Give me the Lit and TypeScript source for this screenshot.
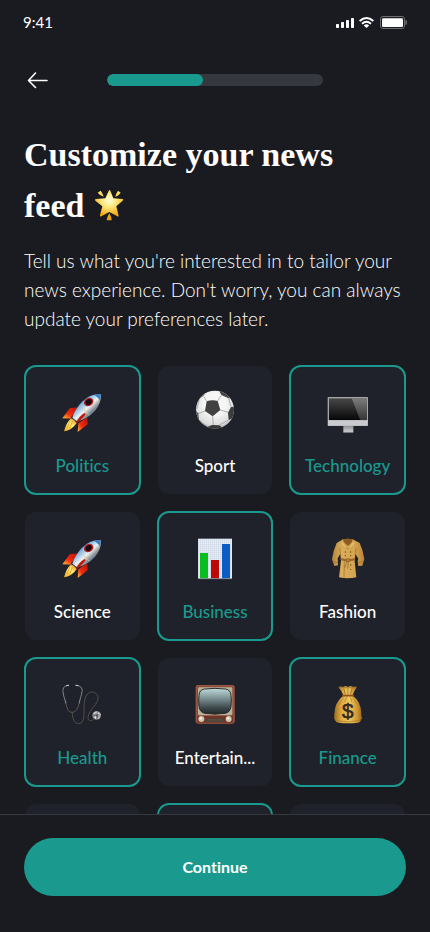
import { LitElement, html, css, TemplateResult } from "lit";
import { customElement, property, state } from "lit/decorators.js";

const rocket = html`<svg viewBox="115 84 144 144" aria-hidden="true">
  <defs>
    <linearGradient id="body" x1="0" y1="0" x2="1" y2="1">
      <stop offset="0.25" stop-color="#4f8fcb" /><stop offset="0.42" stop-color="#a9cfee" />
      <stop offset="0.52" stop-color="#f1f2ee" /><stop offset="0.64" stop-color="#8e9499" />
      <stop offset="0.8" stop-color="#2d5f96" />
    </linearGradient>
    <linearGradient id="fin" x1="1" y1="0" x2="0" y2="1">
      <stop offset="0" stop-color="#b80f08" /><stop offset="0.6" stop-color="#ee2a10" /><stop offset="1" stop-color="#ffc23a" />
    </linearGradient>
    <linearGradient id="flame" x1="1" y1="0" x2="0" y2="1">
      <stop offset="0" stop-color="#e8861a" /><stop offset="0.45" stop-color="#fff07a" /><stop offset="1" stop-color="#f7a21b" />
    </linearGradient>
  </defs>
  <path d="M180 142 L151 144 L128 175 L158 176 Z" fill="url(#fin)" />
  <path d="M203 172 L204 193 L174 216 L176 190 Z" fill="url(#fin)" />
  <path d="M152 177 Q140 188 133 214 Q155 212 171 190 L166 178 Z" fill="url(#flame)" />
  <path d="M150 183 L142 205 M158 184 L150 206" stroke="#e58a14" stroke-width="2" fill="none" />
  <path d="M153 171 L160 166 L180 182 L172 189 Z" fill="#2a3138" />
  <path d="M243 103 Q213 100 187 125 Q167 146 158 173 L172 184 Q202 178 226 152 Q246 129 243 103 Z" fill="url(#body)" />
  <path d="M243 103 Q232 101 221 105 Q234 109 241 123 Q244 113 243 103 Z" fill="#3d80c2" />
  <path d="M181 139 Q194 148 209 166" stroke="#d6c27a" stroke-width="2" fill="none" />
  <path d="M195 159 Q178 168 168 190 Q184 182 198 163 Z" fill="#c3150c" />
  <ellipse cx="207" cy="126" rx="15" ry="12" transform="rotate(-35 207 126)" fill="#b91a1d" />
  <ellipse cx="207" cy="126" rx="10" ry="8" transform="rotate(-35 207 126)" fill="#140c0e" />
</svg>`;

const ball = html`<svg viewBox="123 84 144 144" aria-hidden="true">
  <defs>
    <radialGradient id="ball" cx="0.5" cy="0.35" r="0.7">
      <stop offset="0.4" stop-color="#f6f6f6" /><stop offset="0.8" stop-color="#dcdcdc" /><stop offset="1" stop-color="#9c9c9c" />
    </radialGradient>
    <clipPath id="round"><circle cx="195" cy="149" r="57" /></clipPath>
  </defs>
  <circle cx="195" cy="149" r="57" fill="url(#ball)" />
  <g clip-path="url(#round)">
    <path d="M170 124 Q187 118 203 123 L211 150 L188 169 L165 153 Z" fill="#414141" />
    <path d="M206 90 L222 92 L243 114 L236 115 L214 105 Z" fill="#454545" />
    <path d="M138 126 L152 106 L170 93 L160 108 L146 118 Z" fill="#5c5c5c" />
    <path d="M254 140 L243 141 L234 158 L236 180 L254 172 Z" fill="#3c3c3c" />
    <path d="M170 202 L186 195 L208 196 L216 202 L206 210 L180 210 Z" fill="#3a3a3a" />
    <path d="M136 150 L145 160 L147 180 L138 172 Z" fill="#5a5a5a" />
    <g stroke="#8c8c8c" stroke-width="2" fill="none">
      <path d="M170 124 L162 110 M203 123 L213 107 M211 150 L235 157 M188 169 L190 195 M165 153 L147 160" />
      <path d="M236 115 L243 141 M236 180 L208 195 M149 182 L172 200 M148 118 L140 148" />
    </g>
  </g>
</svg>`;

const monitor = html`<svg viewBox="119 84 144 144" aria-hidden="true">
  <defs>
    <linearGradient id="screen" x1="0" y1="0" x2="0" y2="1"><stop offset="0" stop-color="#484848" /><stop offset="1" stop-color="#060606" /></linearGradient>
    <linearGradient id="glare" x1="0" y1="0" x2="0" y2="1"><stop offset="0" stop-color="#7c7c7c" /><stop offset="1" stop-color="#333" /></linearGradient>
    <linearGradient id="stand" x1="0" y1="0" x2="0" y2="1"><stop offset="0" stop-color="#8f9092" /><stop offset="1" stop-color="#d2d3d5" /></linearGradient>
  </defs>
  <rect x="130" y="111" width="121" height="87" rx="2" fill="#a5a6a8" />
  <rect x="134" y="115" width="113" height="66" fill="url(#screen)" />
  <path d="M202 115 H247 V181 H228 Z" fill="url(#glare)" />
  <rect x="131" y="182" width="119" height="15" fill="#c9cacd" />
  <path d="M131 182 H250" stroke="#e4e4e6" stroke-width="2" />
  <rect x="177" y="198" width="30" height="19" fill="url(#stand)" />
  <path d="M177 217 H207" stroke="#8c8e92" stroke-width="2" />
</svg>`;

const chart = html`<svg viewBox="123 84 144 144" aria-hidden="true">
  <defs>
    <pattern id="squares" width="6" height="6" patternUnits="userSpaceOnUse">
      <rect width="6" height="6" fill="#e9eff6" /><path d="M0 0 H6 M0 0 V6" stroke="#bccbdc" stroke-width="2" />
    </pattern>
  </defs>
  <rect x="144" y="98" width="102" height="120" fill="url(#squares)" />
  <rect x="150" y="141" width="24" height="76" fill="#08bd20" />
  <rect x="183" y="162" width="24" height="55" fill="#bd0808" />
  <rect x="216" y="114" width="24" height="103" fill="#0a5dc2" />
  <path d="M144 218 H246" stroke="#858c98" stroke-width="2" />
</svg>`;

const coat = html`<svg viewBox="119 84 144 144" aria-hidden="true">
  <defs>
    <linearGradient id="cloth" x1="0" y1="0" x2="1" y2="0">
      <stop offset="0" stop-color="#b5843a" /><stop offset="0.3" stop-color="#dcae59" /><stop offset="0.7" stop-color="#d4a450" /><stop offset="1" stop-color="#b98538" />
    </linearGradient>
  </defs>
  <path d="M176 100 Q191 96 205 100 L226 111 Q236 132 240 158 L234 179 L222 180 L220 166 L222 158 L213 143 L211 165 L216 214 Q190 220 164 214 L170 164 L168 143 L160 157 L161 178 L150 180 L143 160 Q147 132 157 111 Z" fill="url(#cloth)" />
  <path d="M176 100 Q191 96 205 100 L203 108 L191 120 L178 108 Z" fill="#8d5a22" />
  <path d="M174 103 L190 129 L179 125 L168 114 Z M207 103 L190 129 L203 125 L213 113 Z" fill="#e2ba69" stroke="#a67630" stroke-width="1" />
  <path d="M169 156 Q190 163 212 156 V163 Q190 169 169 163 Z" fill="#9c6829" />
  <path d="M186 158 h9 v9 h-9z M192 166 L190 188 M188 166 L180 187" fill="#b9833a" stroke="#8d5e27" stroke-width="2" />
  <path d="M180 164 L179 215 M168 143 L167 125 M213 143 L215 125 M144 167 L161 170 M221 169 L239 166" stroke="#99692d" stroke-width="2" fill="none" />
  <g fill="#754817"><circle cx="183" cy="138" r="2" /><circle cx="199" cy="138" r="2" /><circle cx="183" cy="149" r="2" /><circle cx="199" cy="149" r="2" /><circle cx="199" cy="177" r="2" /><circle cx="199" cy="190" r="2" /></g>
</svg>`;

const stethoscope = html`<svg viewBox="115 90 144 144" aria-hidden="true">
  <g fill="none" stroke-linecap="round" stroke-width="3">
    <path d="M138 154 C141 174 145 187 157 187 C170 187 176 173 180 153" stroke="#5c5855" />
    <path d="M158 188 C158 207 164 221 177 221 C202 220 188 175 196 147 C202 121 229 119 235 140 C239 161 207 178 205 202 C204 214 217 216 224 205" stroke="#524e4a" />
    <path d="M146 106 C134 107 129 113 130 125 C131 140 136 144 138 159 M169 106 C182 107 189 113 187 125 C185 140 181 144 179 159" stroke="#83878e" />
    <path d="M141 107 L147 106 M169 106 L175 107" stroke="#d0d1d3" />
  </g>
  <circle cx="231" cy="196" r="13" fill="#8a8a8e" />
  <path d="M221 190 L230 184 L231 194 Z M235 186 L244 194 L236 197 Z M221 199 L229 198 L229 208 Z M234 201 L241 200 L236 208 Z" fill="#f1f1f2" />
  <path d="M227 188 L236 205 M222 199 L240 193" stroke="#38383c" stroke-width="2" />
</svg>`;

const television = html`<svg viewBox="123 90 144 144" aria-hidden="true">
  <defs>
    <linearGradient id="tube" x1="0" y1="0" x2="0" y2="1"><stop offset="0" stop-color="#c0dcdc" /><stop offset="0.35" stop-color="#82999b" /><stop offset="0.75" stop-color="#3e494c" /><stop offset="1" stop-color="#20272a" /></linearGradient>
  </defs>
  <path d="M147 216 h12 v8 h-9z M233 216 h12 l-3 8 h-9z" fill="#3c211b" />
  <rect x="137" y="105" width="117" height="116" rx="7" fill="#8b4a38" />
  <rect x="139" y="107" width="113" height="112" rx="5" fill="none" stroke="#a4654f" stroke-width="2" />
  <rect x="144" y="112" width="103" height="84" rx="4" fill="#b9b09a" />
  <path d="M164 117 Q195 113 226 117 Q242 119 243 136 Q245 153 243 170 Q240 187 226 190 Q195 195 164 190 Q150 187 147 170 Q145 153 147 136 Q148 119 164 117 Z" fill="url(#tube)" stroke="#2c2c29" stroke-width="3" />
  <rect x="142" y="198" width="107" height="20" rx="3" fill="#713528" />
  <path d="M173 205 H216 L223 216 H166 Z" fill="#4a4036" />
  <path d="M173 208 H217 M170 213 H220" stroke="#655747" stroke-width="2" />
  <circle cx="154" cy="207" r="9" fill="#cfc7b3" /><circle cx="236" cy="207" r="9" fill="#cfc7b3" />
  <circle cx="152" cy="205" r="4" fill="#f1ecdf" /><circle cx="234" cy="205" r="4" fill="#f1ecdf" />
</svg>`;

const moneyBag = html`<svg viewBox="119 90 144 144" aria-hidden="true">
  <defs>
    <linearGradient id="sack" x1="0" y1="0" x2="1" y2="0"><stop offset="0" stop-color="#9e6c20" /><stop offset="0.25" stop-color="#dcaa40" /><stop offset="0.55" stop-color="#efc95f" /><stop offset="0.85" stop-color="#c88f2f" /><stop offset="1" stop-color="#8e5c1c" /></linearGradient>
  </defs>
  <path d="M162 112 Q168 107 176 111 Q183 107 191 111 Q199 107 207 111 Q213 107 218 112 Q210 121 205 136 H177 Q171 121 162 112 Z" fill="url(#sack)" />
  <path d="M165 113 H214 M178 115 L183 133 M191 114 V134 M204 114 L198 133" stroke="#8c5d24" stroke-width="2" fill="none" />
  <path d="M176 138 Q151 157 150 192 Q147 217 163 218 Q191 222 221 218 Q230 216 229 210 L234 205 Q230 201 231 190 Q230 155 206 138 Z" fill="url(#sack)" />
  <path d="M175 137 H207" stroke="#8f4d18" stroke-width="5" stroke-linecap="round" />
  <path d="M178 142 L163 165 M187 142 L181 156 M198 142 L203 156 M205 142 L221 166 M155 212 Q190 220 228 211" stroke="#a5742b" stroke-width="2" fill="none" />
  <text x="190" y="203" text-anchor="middle" class="dollar">$</text>
</svg>`;

const star = html`<svg class="star" viewBox="28 22 96 102" aria-hidden="true">
  <defs>
    <radialGradient id="glow" cx="0.5" cy="0.38" r="0.6"><stop offset="0" stop-color="#fffde0" /><stop offset="0.4" stop-color="#ffec83" /><stop offset="1" stop-color="#f5a60e" /></radialGradient>
    <linearGradient id="ray" x1="0" y1="0" x2="0" y2="1"><stop offset="0" stop-color="#ffe36a" /><stop offset="1" stop-color="#e69a0a" /></linearGradient>
  </defs>
  <path d="M42 36 L51 30 Q57 37 60 48 Q49 45 42 36 Z M103 30 L111 36 Q106 45 95 49 Q97 38 103 30 Z M77 98 Q83 107 84 119 H69 Q71 107 77 98 Z" fill="url(#ray)" />
  <path d="M76 29 Q78 27 80 30 L89 53 L117 55 Q121 57 117 60 L98 77 L105 105 Q105 109 101 107 L77 94 L53 107 Q48 109 49 104 L56 77 L35 60 Q32 56 37 55 L65 53 Z" fill="url(#glow)" />
</svg>`;

const backArrow = html`<svg viewBox="0 0 24 24" aria-hidden="true">
  <path d="M21 12.500H3 M9.500 5 L2.500 12.500 L9.500 19.500" fill="none" stroke="#fff" stroke-width="1.600" stroke-linecap="round" stroke-linejoin="round" />
</svg>`;

interface Topic {
  name: string;
  icon: TemplateResult;
}

const TOPICS: Topic[] = [
  { name: "Politics", icon: rocket },
  { name: "Sport", icon: ball },
  { name: "Technology", icon: monitor },
  { name: "Science", icon: rocket },
  { name: "Business", icon: chart },
  { name: "Fashion", icon: coat },
  { name: "Health", icon: stethoscope },
  { name: "Entertain...", icon: television },
  { name: "Finance", icon: moneyBag },
];

@customElement("status-bar")
class StatusBar extends LitElement {
  static styles = css`
    :host { display: flex; align-items: center; justify-content: space-between; height: 44px; padding: 0 23px; flex: none; }
    .time { font-size: 15px; line-height: 20px; }
    svg { display: block; width: 72px; height: 14px; }
  `;
  render() {
    return html`<span class="time">9:41</span>
      <svg viewBox="0 0 72 14" role="img" aria-label="Signal, Wi-Fi and battery">
        <g fill="#fff">
          <rect x="1" y="9" width="3" height="4" rx="0.7" /><rect x="6" y="7" width="3" height="6" rx="0.7" />
          <rect x="11" y="5" width="3" height="8" rx="0.7" /><rect x="16" y="3" width="3" height="10" rx="0.7" />
          <path d="M31.500 13 L28.800 10.400 Q31.500 8.300 34.200 10.400 Z" />
          <rect x="47" y="3.300" width="21" height="8.700" rx="1.300" />
        </g>
        <path d="M24.600 6 Q31.500 0 38.400 6 M27 8.700 Q31.500 4.900 36 8.700" stroke="#fff" stroke-width="1.900" fill="none" />
        <rect x="45.500" y="1.500" width="24" height="12" rx="2.500" fill="none" stroke="#6e6f72" />
        <path d="M71 5.500 Q72.500 7.500 71 9.500 Z" fill="#6e6f72" stroke="#6e6f72" />
      </svg>`;
  }
}

@customElement("topic-card")
class TopicCard extends LitElement {
  @property({ attribute: false }) topic!: Topic;
  @property({ type: Boolean }) selected = false;

  static styles = css`
    :host { display: block; min-width: 0; }
    .card {
      box-sizing: border-box; width: 100%; height: 130px; margin: 0; padding: 22px 0 0;
      display: flex; flex-direction: column; align-items: center; gap: 18px;
      border: 1px solid transparent; border-radius: 12px;
      background: #1f222a; background-clip: padding-box; color: #fff; font: inherit;
    }
    .selected { padding-top: 21px; border: 2px solid #1a998e; background-clip: border-box; color: #1a998e; }
    .name { font-size: 17px; line-height: 24px; font-weight: 500; white-space: nowrap; font-variant-ligatures: none; }
    svg { display: block; width: 48px; height: 48px; flex: none; }
    .dollar { font: 62px "Liberation Sans", sans-serif; fill: #332b22; stroke: #332b22; stroke-width: 2px; }
  `;
  render() {
    return html`<button class="card ${this.selected ? "selected" : ""}" aria-pressed=${this.selected ? "true" : "false"}>
      ${this.topic.icon}<span class="name">${this.topic.name}</span>
    </button>`;
  }
}

@customElement("app-root")
class AppRoot extends LitElement {
  @state() private chosen = new Set(["Politics", "Technology", "Business", "Health", "Finance"]);

  static styles = css`
    :host {
      display: flex; flex-direction: column; height: 100vh; overflow: hidden;
      background: #1a1b20; color: #fff; font-family: Lato, "Liberation Sans", sans-serif;
    }
    .top { display: grid; grid-template-columns: 28px 1fr 28px; align-items: center; padding: 22px 24px; flex: none; }
    .back { width: 28px; height: 28px; padding: 2px; margin: 0; border: 0; background: none; }
    .back svg { display: block; width: 24px; height: 24px; }
    .track { justify-self: center; width: 66%; height: 12px; border-radius: 6px; background: #35383f; overflow: hidden; }
    .fill { height: 100%; border-radius: 6px; background: #1a998e; }
    main { flex: 1; min-height: 0; overflow-y: auto; scrollbar-width: none; padding: 13px 24px 0; }
    h1 { margin: 0; font: bold 34px/51px "Liberation Serif", serif; }
    .together { white-space: nowrap; }
    .star { width: 32px; height: 34px; vertical-align: -5px; }
    p { margin: 15px 0 32px; font-size: 19px; line-height: 29px; font-weight: 300; font-variant-ligatures: none; }
    .grid { display: grid; grid-template-columns: repeat(3, minmax(0, 1fr)); gap: 16px; }
    .blank { box-sizing: border-box; height: 130px; border: 1px solid transparent; border-radius: 12px; background: #1f222a; background-clip: padding-box; }
    .picked { border: 2px solid #1a998e; }
    footer { flex: none; padding: 23px 24px 36px; border-top: 1px solid #35383f; }
    .continue {
      display: block; width: 100%; height: 58px; border: 0; border-radius: 29px; padding: 0;
      background: #1a998e; color: #fff; font: bold 16px/24px Lato, sans-serif; font-variant-ligatures: none;
    }
  `;

  private toggle(name: string) {
    const next = new Set(this.chosen);
    if (!next.delete(name)) next.add(name);
    this.chosen = next;
  }

  render() {
    return html`
      <status-bar></status-bar>
      <header class="top">
        <button class="back" aria-label="Back">${backArrow}</button>
        <div class="track" role="progressbar" aria-label="Setup progress" aria-valuenow="44" aria-valuemin="0" aria-valuemax="100">
          <div class="fill" style="width: 44.400%"></div>
        </div>
      </header>
      <main>
        <h1>Customize your news <span class="together">feed ${star}</span></h1>
        <p>Tell us what you're interested in to tailor your news experience. Don't worry, you can always update your preferences later.</p>
        <div class="grid">
          ${TOPICS.map((t) => html`<topic-card .topic=${t} ?selected=${this.chosen.has(t.name)} @click=${() => this.toggle(t.name)}></topic-card>`)}
          <div class="blank"></div>
          <div class="blank picked"></div>
          <div class="blank"></div>
        </div>
      </main>
      <footer><button class="continue">Continue</button></footer>
    `;
  }
}
